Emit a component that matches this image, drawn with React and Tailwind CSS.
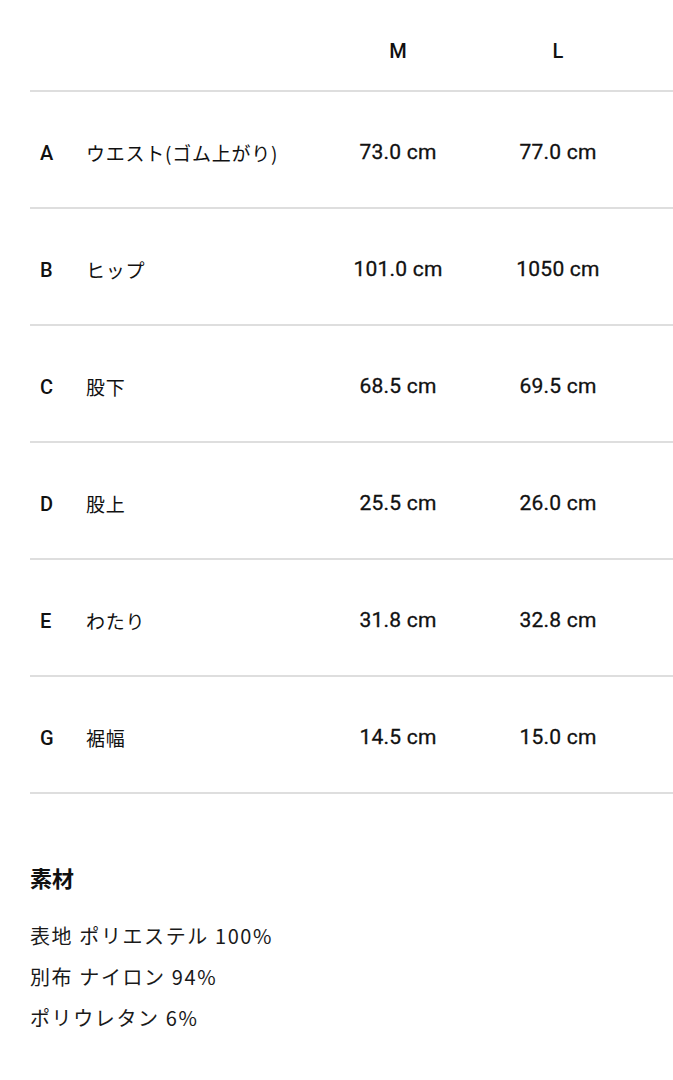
const rows = [
  { key: 'A', label: 'ウエスト(ゴム上がり)', m: '73.0 cm', l: '77.0 cm' },
  { key: 'B', label: 'ヒップ', m: '101.0 cm', l: '1050 cm' },
  { key: 'C', label: '股下', m: '68.5 cm', l: '69.5 cm' },
  { key: 'D', label: '股上', m: '25.5 cm', l: '26.0 cm' },
  { key: 'E', label: 'わたり', m: '31.8 cm', l: '32.8 cm' },
  { key: 'G', label: '裾幅', m: '14.5 cm', l: '15.0 cm' },
]

const num = { fontFamily: 'Roboto, "Noto Sans", sans-serif' }
const jp = { fontFamily: '"Noto Sans CJK JP", "Noto Sans", sans-serif' }

function App() {
  return (
    <div className="w-[673px] min-h-[1080px] bg-white text-[#111] pl-[30px]">
      <div className="grid grid-cols-[56px_232px_160px_160px_1fr] h-[92px] border-b-2 border-[#dedede] pt-[39px]" style={num}>
        <div />
        <div />
        <div className="text-center text-[20px] font-medium leading-6">M</div>
        <div className="text-center text-[20px] font-medium leading-6">L</div>
        <div />
      </div>

      {rows.map((r) => (
        <div key={r.key} className="grid grid-cols-[56px_232px_160px_160px_1fr] h-[117px] border-b-2 border-[#dedede] items-center pt-[7px]">
          <div className="pl-[10px] text-[20px] font-medium" style={num}>{r.key}</div>
          <div className="text-[19px] tracking-[0.04em]" style={jp}>{r.label}</div>
          <div className="text-center text-[21px] tracking-[0.01em] [-webkit-text-stroke:0.3px_#111]" style={num}>{r.m}</div>
          <div className="text-center text-[21px] tracking-[0.01em] [-webkit-text-stroke:0.3px_#111]" style={num}>{r.l}</div>
          <div />
        </div>
      ))}

      <div className="pt-[67px]" style={jp}>
        <h2 className="text-[22px] font-bold leading-8 mb-[22px]">素材</h2>
        <div className="text-[20px] leading-[41px] tracking-[0.08em] text-[#1a1a1a]">
          <p>表地 ポリエステル 100%</p>
          <p>別布 ナイロン 94%</p>
          <p>ポリウレタン 6%</p>
        </div>
      </div>
    </div>
  )
}

export default App
